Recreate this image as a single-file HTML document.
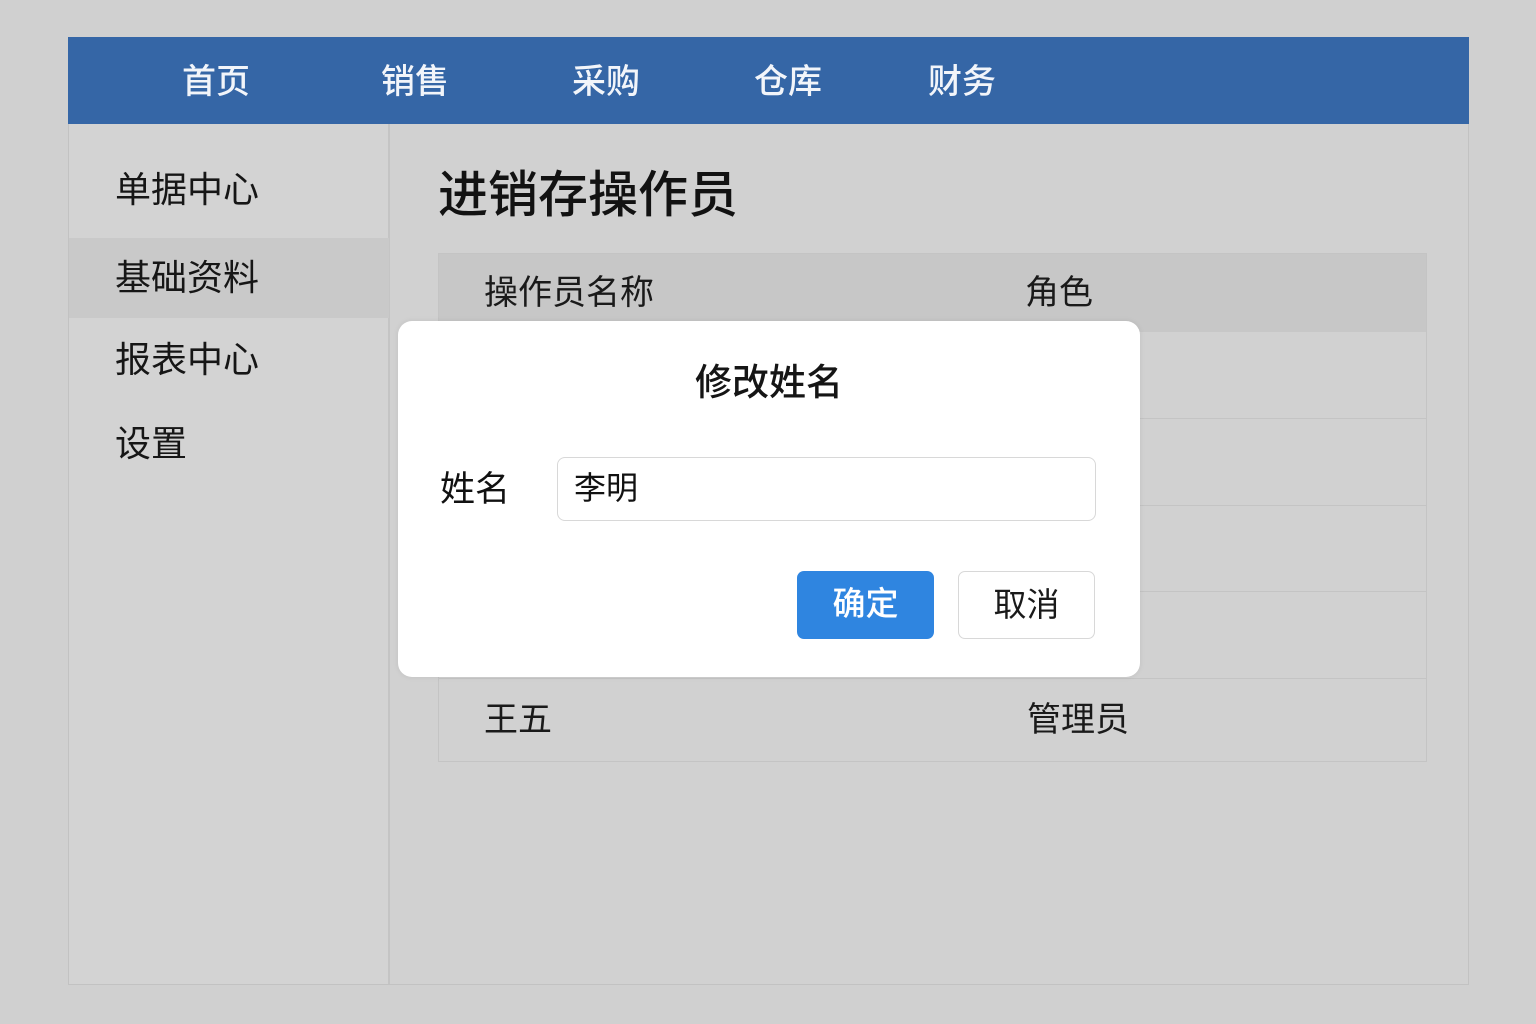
<!DOCTYPE html>
<html><head><meta charset="utf-8"><style>
*{margin:0;padding:0;box-sizing:border-box}
body{width:1536px;height:1024px;background:#d0d0d0;font-family:"Liberation Sans","Noto Sans CJK SC",sans-serif;position:relative;overflow:hidden;color:#111}
.frame{position:absolute;left:68px;top:37px;width:1401px;height:948px;background:#d1d1d1;border:1px solid #c2c2c2}
.nav{position:absolute;left:68px;top:37px;width:1401px;height:87px;background:#3566a6}
.nav span{position:absolute;top:23px;color:#f2f5fa;font-size:34px;font-weight:500;line-height:44px}
.side{position:absolute;left:69px;top:124px;width:321px;height:860px;border-right:2px solid #c4c4c4;background:#d3d3d3}
.side div{position:absolute;left:0;width:320px;font-size:36px;padding-left:46px;line-height:46px;color:#161616}
.sel{background:#c9c9c9}
h1{position:absolute;left:438px;top:164px;font-size:50px;font-weight:500;line-height:62px;color:#121212}
.table{position:absolute;left:438px;top:253px;width:989px;height:509px;border:1px solid #c4c4c4}
.th{position:absolute;left:0;top:0;width:100%;height:78px;background:#c7c7c7}
.row{position:absolute;left:0;width:100%;border-top:1px solid #c4c4c4}
.t{position:absolute;font-size:34px;line-height:44px;color:#1a1a1a}
.modal{position:absolute;left:398px;top:321px;width:742px;height:356px;background:#fff;border-radius:14px;box-shadow:0 0 6px rgba(0,0,0,.08)}
.mt{position:absolute;left:0;width:100%;top:39px;text-align:center;font-size:37px;line-height:46px;color:#151515;font-weight:500}
.lab{position:absolute;left:42px;top:146px;font-size:35px;line-height:46px}
.inp{position:absolute;left:159px;top:136px;width:539px;height:64px;border:1.5px solid #d8d8d8;border-radius:8px;font-size:32px;line-height:60px;padding-left:16px}
.btn{position:absolute;top:250px;height:68px;width:137px;border-radius:7px;font-size:33px;text-align:center;line-height:66px}
.ok{left:399px;background:#2f85e0;color:#fff;font-weight:500}
.no{left:560px;border:1.5px solid #d8d8d8;color:#1a1a1a}
</style></head><body>
<div class="frame"></div>
<div class="nav">
<span style="left:114px">首页</span><span style="left:313px">销售</span><span style="left:504px">采购</span><span style="left:686px">仓库</span><span style="left:860px">财务</span>
</div>
<div class="side">
<div style="top:43px">单据中心</div>
<div class="sel" style="top:114px;height:80px;padding-top:17px">基础资料</div>
<div style="top:213px">报表中心</div>
<div style="top:297px">设置</div>
</div>
<h1>进销存操作员</h1>
<div class="table">
<div class="th"></div>
<div class="t" style="left:45px;top:17px">操作员名称</div>
<div class="t" style="left:586px;top:17px">角色</div>
<div class="row" style="top:164px"></div>
<div class="row" style="top:251px"></div>
<div class="row" style="top:337px"></div>
<div class="row" style="top:424px"></div>
<div class="t" style="left:45px;top:444px">王五</div>
<div class="t" style="left:588px;top:444px">管理员</div>
</div>
<div class="modal">
<div class="mt">修改姓名</div>
<div class="lab">姓名</div>
<div class="inp">李明</div>
<div class="btn ok">确定</div>
<div class="btn no">取消</div>
</div>
</body></html>
